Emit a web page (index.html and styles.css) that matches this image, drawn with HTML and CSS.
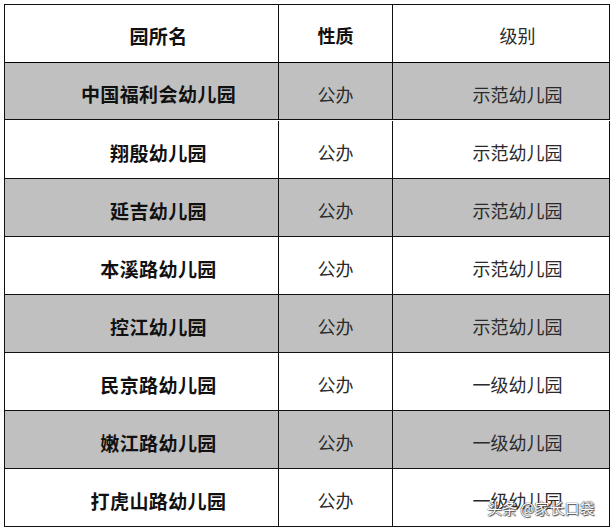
FILE: index.html
```html
<!DOCTYPE html>
<html lang="zh">
<head>
<meta charset="utf-8">
<link rel="stylesheet" href="styles.css">
</head>
<body>
<div class="sheet">
  <div class="cell name head">园所名</div>
  <div class="cell type head">性质</div>
  <div class="cell level head">级别</div>

  <div class="cell name gray first">中国福利会幼儿园</div>
  <div class="cell type gray first">公办</div>
  <div class="cell level gray first">示范幼儿园</div>

  <div class="cell name">翔殷幼儿园</div>
  <div class="cell type">公办</div>
  <div class="cell level">示范幼儿园</div>

  <div class="cell name gray">延吉幼儿园</div>
  <div class="cell type gray">公办</div>
  <div class="cell level gray">示范幼儿园</div>

  <div class="cell name">本溪路幼儿园</div>
  <div class="cell type">公办</div>
  <div class="cell level">示范幼儿园</div>

  <div class="cell name gray">控江幼儿园</div>
  <div class="cell type gray">公办</div>
  <div class="cell level gray">示范幼儿园</div>

  <div class="cell name">民京路幼儿园</div>
  <div class="cell type">公办</div>
  <div class="cell level">一级幼儿园</div>

  <div class="cell name gray">嫩江路幼儿园</div>
  <div class="cell type gray">公办</div>
  <div class="cell level gray">一级幼儿园</div>

  <div class="cell name">打虎山路幼儿园</div>
  <div class="cell type">公办</div>
  <div class="cell level">一级幼儿园</div>
</div>
<div class="watermark">头条 @家长口袋</div>
</body>
</html>
```

FILE: styles.css
```css
html, body {
  margin: 0;
  padding: 0;
  background: #ffffff;
}

body {
  width: 615px;
  height: 531px;
  position: relative;
  overflow: hidden;
  font-family: "Noto Sans CJK SC", "Noto Sans", sans-serif;
}

.sheet {
  margin: 4px 0 0 4px;
  width: 606px;
  display: grid;
  grid-template-columns: 274px 114px 217px;
  grid-auto-rows: 58px;
  border-top: 1px solid #111;
  border-left: 1px solid #111;
  box-sizing: border-box;
}

.cell {
  box-sizing: border-box;
  border-right: 1px solid #111;
  border-bottom: 1px solid #111;
  display: flex;
  align-items: center;
  justify-content: center;
  padding-top: 5px;
  font-size: 18px;
  color: #2a2a2a;
  line-height: 1;
}

.cell.head {
  height: 60px;
  border-bottom: 3px solid #000;
  padding-top: 3px;
}

.cell.first {
  height: 57px;
}

.sheet > .cell:nth-child(-n+3) {
  align-self: start;
}

.gray {
  background: #c0c0c0;
}

.name {
  font-weight: 700;
  color: #111;
  font-size: 19px;
  letter-spacing: 0.4px;
  padding-left: 34px;
}

.type.head {
  font-weight: 700;
  color: #111;
}

.level {
  padding-left: 33px;
}

.watermark {
  position: absolute;
  left: 487px;
  top: 499px;
  font-size: 15px;
  line-height: 18px;
  color: #ffffff;
  text-shadow: 0 0 1px #333, 0 0 1px #333, 1px 1px 1px #555;
}
```
